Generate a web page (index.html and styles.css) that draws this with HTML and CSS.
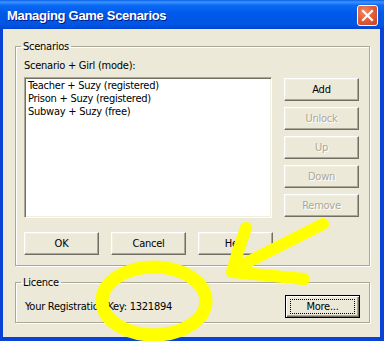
FILE: index.html
```html
<!DOCTYPE html>
<html lang="en">
<head>
  <meta charset="UTF-8">
  <meta name="viewport" content="width=device-width, initial-scale=1.0">
  <title>Managing Game Scenarios</title>
  <link rel="stylesheet" href="styles.css">
</head>
<body>
  <div class="window">
    <div class="titlebar">
      <span class="title">Managing Game Scenarios</span>
      <button class="close" aria-label="Close">
        <svg width="13" height="13" viewBox="0 0 13 13">
          <path d="M2 2 L11 11 M11 2 L2 11" stroke="#fff" stroke-width="2.2" stroke-linecap="square"/>
        </svg>
      </button>
    </div>

    <div class="client">
      <fieldset class="group">
        <legend>Scenarios</legend>
        <div class="label">Scenario + Girl (mode):</div>
        <div class="list-row">
          <ul class="list">
            <li>Teacher + Suzy (registered)</li>
            <li>Prison + Suzy (registered)</li>
            <li>Subway + Suzy (free)</li>
          </ul>
          <div class="side-buttons">
            <button class="btn">Add</button>
            <button class="btn" disabled>Unlock</button>
            <button class="btn" disabled>Up</button>
            <button class="btn" disabled>Down</button>
            <button class="btn" disabled>Remove</button>
          </div>
        </div>
        <div class="bottom-buttons">
          <button class="btn">OK</button>
          <button class="btn">Cancel</button>
          <button class="btn">Help</button>
        </div>
      </fieldset>

      <fieldset class="group licence">
        <legend>Licence</legend>
        <div class="licence-row">
          <span class="key">Your Registration Key: 1321894</span>
          <button class="btn default"><span class="focus">More...</span></button>
        </div>
      </fieldset>
    </div>

    <!-- yellow marker drawn over the screenshot -->
    <svg class="scribble" width="384" height="341" viewBox="0 0 384 341">
      <ellipse cx="154" cy="301" rx="52" ry="34" fill="none" stroke="#ffff00" stroke-width="13"/>
      <path d="M323 224 L240 266 M246 228 Q238 250 232 272 L304 279" fill="none" stroke="#ffff00" stroke-width="12" stroke-linecap="round" stroke-linejoin="round"/>
    </svg>
  </div>
</body>
</html>
```

FILE: styles.css
```css
html, body {
  margin: 0;
  padding: 0;
}
body {
  font-family: 'DejaVu Sans Condensed', 'DejaVu Sans', sans-serif;
  font-size: 11px;
  letter-spacing: -0.25px;
  background: #ece9d8;
}
.window {
  position: relative;
  width: 384px;
  height: 341px;
  display: flex;
  flex-direction: column;
  overflow: hidden;
}
.titlebar {
  height: 29px;
  display: flex;
  align-items: center;
  justify-content: space-between;
  padding: 0 6px 0 7px;
  background: linear-gradient(to bottom, #0a5fe8 0%, #3d95ff 7%, #0a6af6 18%, #005ae9 45%, #0055e5 85%, #0045d0 100%);
}
.title {
  color: #fff;
  font-family: 'Liberation Sans', Arial, sans-serif;
  font-weight: bold;
  font-size: 13px;
  letter-spacing: -0.3px;
  text-shadow: 1px 1px 0 #0a1883;
  margin-top: 1px;
}
.close {
  width: 21px;
  height: 21px;
  margin-top: 2px;
  padding: 0;
  display: flex;
  align-items: center;
  justify-content: center;
  border: 1px solid #fff;
  border-radius: 3px;
  background: radial-gradient(circle at 35% 30%, #f08a6c 0%, #e2603c 45%, #c7431f 100%);
}
.client {
  flex: 1;
  padding: 11px 10px 12px 12px;
  border-left: 3px solid #0842d6;
  border-right: 4px solid #0842d6;
  border-bottom: 4px solid #0842d6;
}
.group {
  margin: 0;
  padding: 6px 9px 10px 8px;
  border: 1px solid #aca899;
  box-shadow: 1px 1px 0 #fff, inset 1px 1px 0 #fff;
}
.group legend {
  margin-left: -3px;
  padding: 0 2px;
  line-height: 13px;
  color: #000;
}
.label {
  line-height: 13px;
}
.list-row {
  display: flex;
  align-items: flex-start;
  gap: 12px;
  margin-top: 5px;
}
.list {
  list-style: none;
  margin: 0;
  padding: 1px 3px 0;
  width: 248px;
  height: 141px;
  box-sizing: border-box;
  background: #fff;
  border: 1px solid;
  border-color: #aca899 #fff #fff #aca899;
  box-shadow: inset 1px 1px 0 #716f64, inset -1px -1px 0 #f1efe2;
}
.list li {
  line-height: 13px;
}
.side-buttons {
  display: flex;
  flex-direction: column;
  gap: 6px;
  margin-top: 1px;
}
.bottom-buttons {
  display: flex;
  gap: 12px;
  margin-top: 14px;
}
.btn {
  width: 75px;
  height: 23px;
  padding: 0;
  font-family: inherit;
  font-size: 11px;
  letter-spacing: inherit;
  color: #000;
  background: #ece9d8;
  border: 1px solid;
  border-color: #fff #716f64 #716f64 #fff;
  box-shadow: inset -1px -1px 0 #aca899, inset 1px 1px 0 #f1efe2;
}
.btn:disabled {
  color: #aca899;
  text-shadow: 1px 1px 0 #fff;
}
.licence {
  margin-top: 10px;
  padding: 6px 9px 4px 8px;
}
.licence-row {
  display: flex;
  align-items: center;
  justify-content: space-between;
}
.key {
  margin-left: 1px;
}
.btn.default {
  border: 1px solid #000;
  box-shadow: inset 1px 1px 0 #fff, inset -1px -1px 0 #716f64, inset -2px -2px 0 #aca899;
  display: flex;
  align-items: center;
  justify-content: center;
}
.focus {
  display: block;
  width: 63px;
  height: 13px;
  line-height: 13px;
  border: 1px dotted #000;
}
.scribble {
  position: absolute;
  left: 0;
  top: 0;
  pointer-events: none;
}
```
